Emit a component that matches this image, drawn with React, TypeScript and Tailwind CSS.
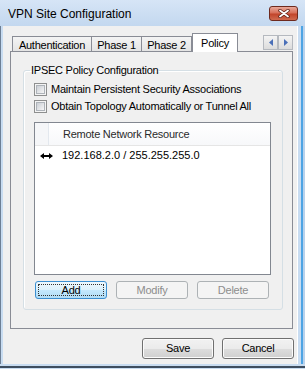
import React from 'react'

const font = "font-['Liberation_Sans',Arial,sans-serif]"
const ui = 'text-[11px] leading-[13px] tracking-[-0.25px]'

const btnNormal =
    'h-[21px] w-[72px] rounded-[3px] border border-[#707070] bg-[linear-gradient(#f2f2f2_0%,#ebebeb_50%,#dddddd_51%,#cfcfcf_100%)] shadow-[inset_0_0_0_1px_#fbfbfb] flex items-center justify-center text-black'
const btnDisabled =
    'h-[18px] w-[72px] rounded-[3px] border border-[#adb2b5] bg-[#f4f4f4] flex items-center justify-center text-[#8d8d8d]'

function Tab({ label, w, first }: { label: string; w: string; first?: boolean }) {
    return (
        <div
            className={`${w} h-[15px] border-t border-r ${first ? 'border-l' : ''} border-[#898c95] bg-[linear-gradient(#f4f4f4,#e4e4e4)] flex justify-center pt-[2px] text-black`}
        >
            {label}
        </div>
    )
}

function CheckBox({ label }: { label: string }) {
    return (
        <div className="flex items-center h-[13px] gap-[4px]">
            <div className="w-[13px] h-[13px] border border-[#8e8f8f] bg-[#f4f4f4] p-[1px]">
                <div className="w-full h-full border border-[#aeb3b9] bg-[linear-gradient(135deg,#cbcfd5,#f6f6f6)]" />
            </div>
            <span className="text-black">{label}</span>
        </div>
    )
}

function ScrollBtn({ dir }: { dir: 'l' | 'r' }) {
    return (
        <div className="w-[15px] h-[15px] border border-[#b5b9bf] bg-[linear-gradient(#f4f4f4,#dcdcdc)] flex items-center justify-center">
            <svg width="4" height="7" viewBox="0 0 4 7">
                {dir === 'l' ? <path d="M4 0 L0 3.5 L4 7 Z" fill="#4a6fb8" /> : <path d="M0 0 L4 3.5 L0 7 Z" fill="#4a6fb8" />}
            </svg>
        </div>
    )
}

export default function App() {
    return (
        <div className={`${font} w-[305px] h-[369px] flex flex-col bg-[#c3d8ef] overflow-hidden`}>
            {/* title bar */}
            <div className="h-[26px] flex justify-between pl-[8px] pr-[7px] bg-[linear-gradient(#d6e5f6,#c3d8ef)]">
                <span className="mt-[7px] text-[12px] leading-[15px] text-black">VPN Site Configuration</span>
                <div className="mt-[6px] w-[29px] h-[15px] rounded-[3px] border border-[#6e2a1e] bg-[linear-gradient(#e9a99a_0%,#d7705a_45%,#c2452b_55%,#cf6a4f_100%)] flex items-center justify-center">
                    <svg width="12" height="9" viewBox="0 0 12 9">
                        <path d="M2 1.5 L10 7.5 M10 1.5 L2 7.5" stroke="#5a1e14" strokeWidth="3.4" strokeLinecap="round" />
                        <path d="M2 1.5 L10 7.5 M10 1.5 L2 7.5" stroke="#ffffff" strokeWidth="1.8" strokeLinecap="round" />
                    </svg>
                </div>
            </div>

            <div className="flex flex-1">
                <div className="w-[3px] border-l border-[#6d7f95] bg-[#c8dcf1]" />

                {/* client */}
                <div className={`flex-1 bg-[#f0f0f0] flex flex-col ${ui}`}>
                    {/* tab strip */}
                    <div className="mt-[7px] ml-[9px] mr-[4px] h-[18px] flex items-end">
                        <Tab label="Authentication" w="w-[80px]" first />
                        <Tab label="Phase 1" w="w-[50px]" />
                        <Tab label="Phase 2" w="w-[50px]" />
                        <div className="relative z-10 -mb-[1px] w-[46px] h-[19px] border-t border-l border-r border-[#898c95] bg-white flex justify-center pt-[3px] text-black">
                            Policy
                        </div>
                        <div className="ml-auto self-start mt-[2px] flex">
                            <ScrollBtn dir="l" />
                            <ScrollBtn dir="r" />
                        </div>
                    </div>

                    {/* tab page */}
                    <div className="ml-[7px] w-[283px] h-[278px] border border-[#898c95] bg-[#f0f0f0]">
                        <fieldset className="mt-[12px] ml-[12px] w-[260px] rounded-[3px] border border-[#d5dfe5] pl-[10px] pb-[10px] shadow-[inset_1px_1px_0_#fff]">
                            <legend className="ml-[-4px] px-[1px] text-black">IPSEC Policy Configuration</legend>
                            <div className="mt-[6px] flex flex-col gap-[4px]">
                                <CheckBox label="Maintain Persistent Security Associations" />
                                <CheckBox label="Obtain Topology Automatically or Tunnel All" />
                            </div>

                            {/* list view */}
                            <div className="mt-[9px] w-[237px] h-[153px] border border-[#828790] bg-white flex flex-col">
                                <div className="h-[23px] flex border-b border-[#e5e5e5] bg-[linear-gradient(#ffffff,#f7f8fa)]">
                                    <div className="w-[14px] border-r border-[#e3e8ee] bg-[#f5f6f8]" />
                                    <div className="flex-1 flex items-center pl-[14px] text-[#2b2b2b]">Remote Network Resource</div>
                                </div>
                                <div className="h-[19px] flex items-center pl-[5px] gap-[9px] text-black tracking-normal">
                                    <svg width="13" height="8" viewBox="0 0 13 8">
                                        <path d="M0 4 L4 1 L4 7 Z M13 4 L9 1 L9 7 Z" fill="#000" />
                                        <rect x="3" y="3" width="7" height="2" fill="#000" />
                                    </svg>
                                    <span>192.168.2.0 / 255.255.255.0</span>
                                </div>
                            </div>

                            <div className="mt-[6px] ml-[1px] flex gap-[9px]">
                                <div className="h-[18px] w-[72px] rounded-[3px] border border-[#3c8fd1] bg-[linear-gradient(#eef8fe_0%,#dcf1fc_50%,#c4e8fd_51%,#b0dcf6_100%)] p-[2px]">
                                    <div className="w-full h-full border border-dotted border-[#333] flex items-center justify-center text-black">Add</div>
                                </div>
                                <div className={btnDisabled}>Modify</div>
                                <div className={btnDisabled}>Delete</div>
                            </div>
                        </fieldset>
                    </div>

                    <div className="mt-[9px] mr-[3px] flex justify-end gap-[8px]">
                        <div className={btnNormal}>Save</div>
                        <div className={btnNormal}>Cancel</div>
                    </div>
                </div>

                <div className="w-[8px] flex">
                    <div className="w-[1px] bg-white" />
                    <div className="w-[3px] bg-[#c8dcf1]" />
                    <div className="w-[2px] bg-[#4ea4e4]" />
                    <div className="w-[2px] bg-[#b9d2ec]" />
                </div>
            </div>
            <div className="h-[5px] flex flex-col">
                <div className="h-[2px] bg-[#c8dcf1]" />
                <div className="h-[2px] bg-[#3e4e60]" />
                <div className="h-[1px] bg-[#c8dcf1]" />
            </div>
        </div>
    )
}
